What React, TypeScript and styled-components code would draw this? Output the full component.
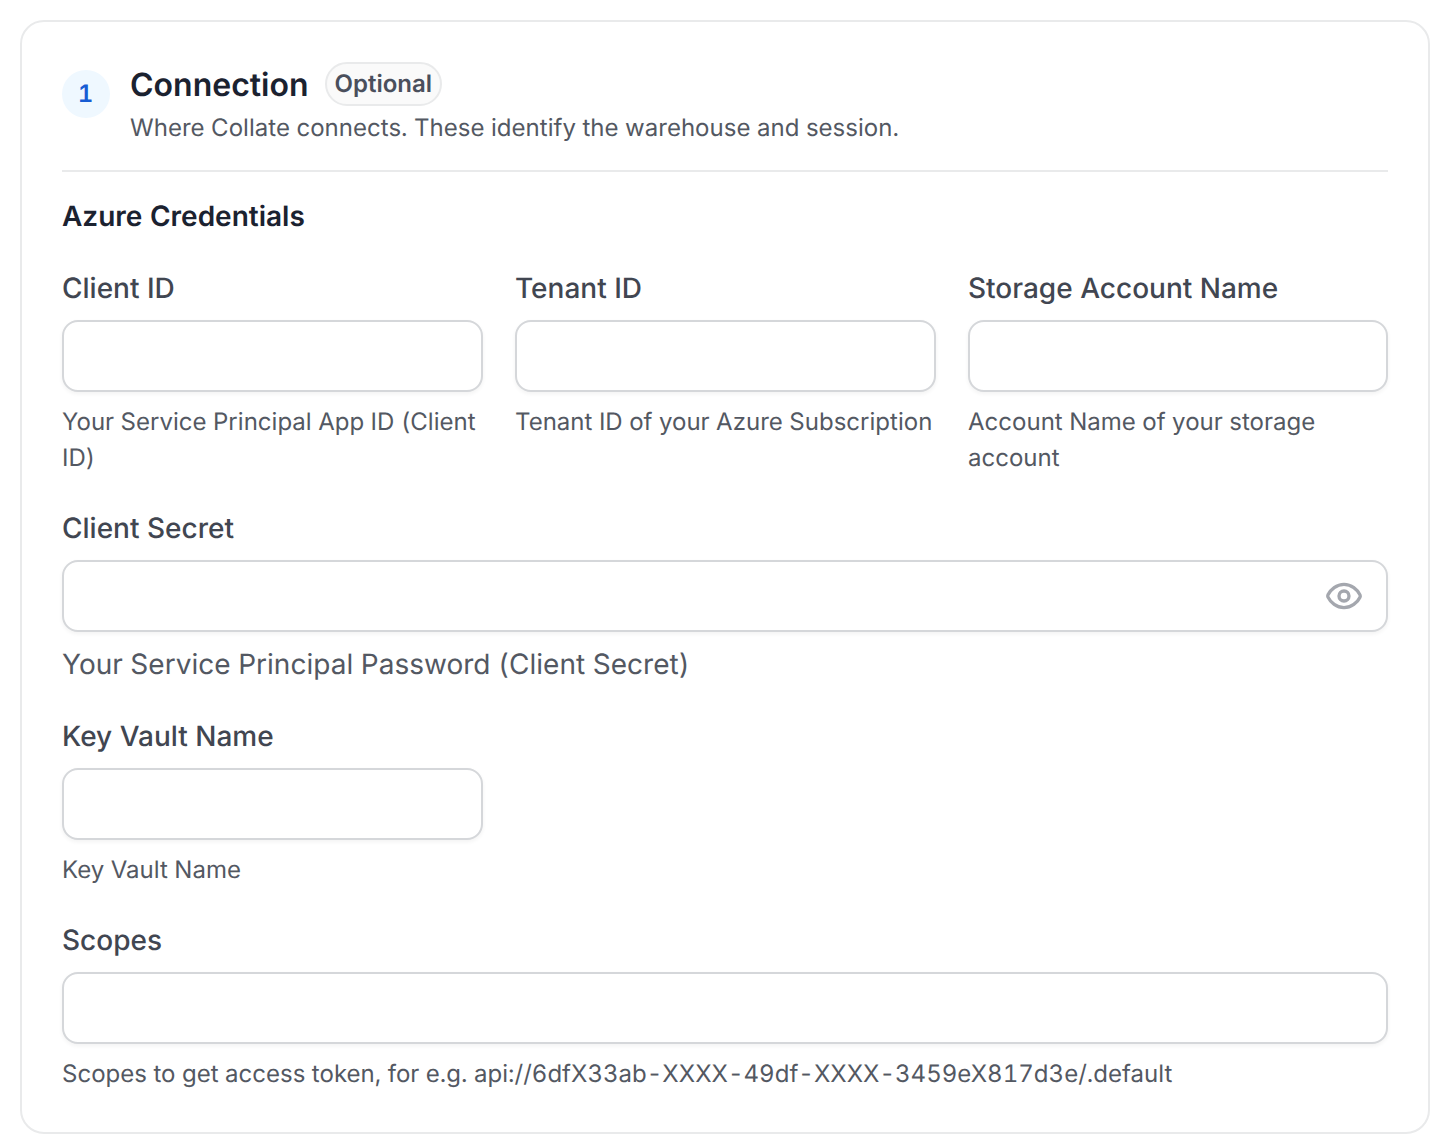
import React from "react";
import styled, { createGlobalStyle } from "styled-components";

const GlobalStyle = createGlobalStyle`
    html, body {
        margin: 0;
        padding: 0;
        background: #fff;
    }
    body {
        font-family: Inter, "Liberation Sans", sans-serif;
        font-variant-numeric: tabular-nums;
        -webkit-font-smoothing: antialiased;
        text-rendering: geometricPrecision;
    }
`;

const Page = styled.div`
    padding: 20px 18px 14px 20px;
`;

const Card = styled.section`
    box-sizing: border-box;
    height: 1114px;
    padding: 40px;
    border: 2px solid #e9eaeb;
    border-radius: 24px;
    background: #fff;
`;

const Header = styled.header`
    display: flex;
    gap: 20px;
    padding-bottom: 22px;
    border-bottom: 2px solid #e9eaeb;
`;

const StepBadge = styled.div`
    flex: none;
    box-sizing: border-box;
    display: flex;
    align-items: center;
    justify-content: center;
    width: 48px;
    height: 48px;
    margin-top: 8px;
    padding: 0 1px 2px 0;
    border-radius: 50%;
    background: #eff8ff;
    color: #175cd3;
    font-size: 24px;
    font-weight: 600;
`;

const TitleRow = styled.div`
    display: flex;
    align-items: flex-start;
    gap: 16px;
`;

const Title = styled.h2`
    margin: 0;
    padding-top: 1px;
    color: #1b2230;
    font-size: 32px;
    font-weight: 600;
    line-height: 44px;
`;

const Tag = styled.span`
    padding: 0 8px;
    border: 2px solid #e9eaeb;
    border-radius: 22px;
    background: #fafafa;
    color: #4a4f5c;
    font-size: 24px;
    font-weight: 600;
    line-height: 40px;
`;

const Subtitle = styled.p`
    margin: 1px 0 0;
    color: #535862;
    font-size: 24px;
    letter-spacing: 0.03px;
    line-height: 40px;
`;

const SectionTitle = styled.h3`
    margin: 25px 0 33px;
    color: #1b2230;
    font-size: 28px;
    font-weight: 600;
    line-height: 38px;
`;

const Grid = styled.div`
    display: grid;
    grid-template-columns: 421px 421px 1fr;
    column-gap: 32px;
`;

const Field = styled.div<{ $span?: number; $gap?: number }>`
    grid-column: span ${(p) => p.$span ?? 1};
    margin-bottom: ${(p) => p.$gap ?? 32}px;
`;

const Label = styled.label`
    display: block;
    margin-bottom: 12px;
    color: #414651;
    font-size: 28px;
    font-weight: 500;
    line-height: 40px;
`;

const InputWrap = styled.div`
    position: relative;
`;

const Input = styled.input`
    display: block;
    box-sizing: border-box;
    width: 100%;
    height: 72px;
    padding: 0 28px;
    border: 2px solid #d5d7da;
    border-radius: 16px;
    outline: none;
    background: #fff;
    box-shadow: 0 2px 4px rgba(10, 13, 18, 0.05);
`;

const EyeButton = styled.span`
    position: absolute;
    top: 16px;
    right: 24px;
    display: flex;
    color: #a4a7ae;
`;

const Hint = styled.p`
    margin: 12px 0 0;
    color: #535862;
    font-size: 24px;
    letter-spacing: 0.02px;
    line-height: 36px;
`;

const LargeHint = styled(Hint)`
    font-size: 28px;
    line-height: 40px;
`;

const EyeIcon = () => (
    <svg width="40" height="40" viewBox="0 0 24 24" fill="none" stroke="currentColor" strokeWidth="2" strokeLinecap="round" strokeLinejoin="round">
        <path d="M2.4 12.7a1.6 1.6 0 0 1 0-1.4C3.9 8.1 7.6 5 12 5s8.100 3.100 9.600 6.300a1.600 1.600 0 0 1 0 1.400C20.100 15.900 16.400 19 12 19s-8.100-3.100-9.600-6.300Z" />
        <circle cx="12" cy="12" r="3" />
    </svg>
);

const App = () => (
    <Page>
        <GlobalStyle />
        <Card>
            <Header>
                <StepBadge>1</StepBadge>
                <div>
                    <TitleRow>
                        <Title>Connection</Title>
                        <Tag>Optional</Tag>
                    </TitleRow>
                    <Subtitle>Where Collate connects. These identify the warehouse and session.</Subtitle>
                </div>
            </Header>
            <SectionTitle>Azure Credentials</SectionTitle>
            <Grid>
                <Field>
                    <Label>Client ID</Label>
                    <Input />
                    <Hint>Your Service Principal App ID (Client ID)</Hint>
                </Field>
                <Field>
                    <Label>Tenant ID</Label>
                    <Input />
                    <Hint>Tenant ID of your Azure Subscription</Hint>
                </Field>
                <Field>
                    <Label>Storage Account Name</Label>
                    <Input />
                    <Hint>Account Name of your storage account</Hint>
                </Field>
                <Field $span={3}>
                    <Label>Client Secret</Label>
                    <InputWrap>
                        <Input type="password" />
                        <EyeButton>
                            <EyeIcon />
                        </EyeButton>
                    </InputWrap>
                    <LargeHint>Your Service Principal Password (Client Secret)</LargeHint>
                </Field>
                <Field>
                    <Label>Key Vault Name</Label>
                    <Input />
                    <Hint>Key Vault Name</Hint>
                </Field>
                <Field $span={3} $gap={0}>
                    <Label>Scopes</Label>
                    <Input />
                    <Hint>Scopes to get access token, for e.g. api://6dfX33ab-XXXX-49df-XXXX-3459eX817d3e/.default</Hint>
                </Field>
            </Grid>
        </Card>
    </Page>
);

export default App;
